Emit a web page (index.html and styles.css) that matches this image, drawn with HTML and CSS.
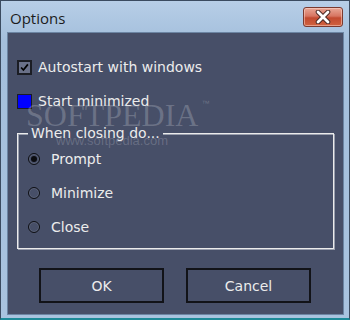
FILE: index.html
```html
<!DOCTYPE html>
<html>
<head>
<meta charset="utf-8">
<link rel="stylesheet" href="styles.css">
</head>
<body>
<div class="window">
  <div class="titlebar">
    <span class="title">Options</span>
    <div class="close">
      <svg width="20" height="14" viewBox="0 0 20 14">
        <path d="M5 2 L15 12 M15 2 L5 12" stroke="#4a2a25" stroke-width="4.6" stroke-linecap="round"/>
        <path d="M5 2 L15 12 M15 2 L5 12" stroke="#ffffff" stroke-width="2.8" stroke-linecap="round"/>
      </svg>
    </div>
  </div>
  <div class="client">
    <div class="row">
      <span class="check checked">
        <svg width="13" height="13" viewBox="0 0 13 13"><path d="M2.5 6.5 L5.2 9.5 L10.5 2.8" fill="none" stroke="#000" stroke-width="2"/></svg>
      </span>
      <span class="label">Autostart with windows</span>
    </div>
    <div class="row row2">
      <span class="check blue"></span>
      <span class="label">Start minimized</span>
    </div>
    <div class="group">
      <span class="legend">When closing do...</span>
      <div class="radio-row first">
        <span class="radio on"></span><span class="label">Prompt</span>
      </div>
      <div class="radio-row">
        <span class="radio"></span><span class="label">Minimize</span>
      </div>
      <div class="radio-row">
        <span class="radio"></span><span class="label">Close</span>
      </div>
    </div>
    <div class="buttons">
      <div class="btn">OK</div>
      <div class="btn">Cancel</div>
    </div>
    <div class="wm">SOFTPEDIA<sup class="tm">™</sup></div>
    <div class="wm-url">www.softpedia.com</div>
  </div>
</div>
</body>
</html>
```
FILE: styles.css
```css
html, body {
  margin: 0;
  padding: 0;
  background: #2a3a4e;
}
.window {
  width: 350px;
  height: 320px;
  box-sizing: border-box;
  border: 1px solid #3b4b60;
  border-bottom: 2px solid #1d8a98;
  background: linear-gradient(#b7cee7, #a4bfdc 40px, #a9c3df);
  display: flex;
  flex-direction: column;
}
.titlebar {
  height: 31px;
  flex: none;
  display: flex;
  align-items: flex-start;
  justify-content: space-between;
  padding: 0 6px 0 9px;
}
.title {
  font-family: "Open Sans", "Noto Sans", sans-serif;
  font-size: 15px;
  color: #1c1c1c;
  margin-top: 7px;
  line-height: 20px;
}
.close {
  margin-top: 6px;
  width: 40px;
  height: 20px;
  box-sizing: border-box;
  border: 1px solid #7a3a30;
  border-radius: 3px;
  background: linear-gradient(#e9a796, #d77561 45%, #c24a30 55%, #d0623f);
  display: flex;
  align-items: center;
  justify-content: center;
  box-shadow: inset 0 0 0 1px rgba(255,220,210,0.5);
}
.client {
  flex: 1;
  margin: 0 5px 3px 6px;
  border: 1px solid #6c85a3;
  background: #474f68;
  position: relative;
  padding: 26px 0 0 9px;
  font-family: "DejaVu Sans", sans-serif;
  font-size: 14px;
  color: #ececec;
}
.row {
  display: flex;
  align-items: center;
  height: 16px;
}
.row2 {
  margin-top: 18px;
}
.check {
  width: 15px;
  height: 15px;
  box-sizing: border-box;
  border: 1px solid #15171d;
  margin-right: 6px;
  display: flex;
  align-items: center;
  justify-content: center;
  flex: none;
}
.check.checked {
  background: #6a7189;
  border: 2px solid #1b1d24;
}
.check.blue {
  background: #0000ff;
  border: 1px solid #1b1d24;
}
.label {
  line-height: 17px;
  white-space: nowrap;
}
.group {
  position: relative;
  margin-top: 24px;
  width: 317px;
  height: 116px;
  box-sizing: border-box;
  border: 1px solid #ebebeb;
  box-shadow: inset 1px 1px 0 #9a9fae, 1px 1px 0 #9a9fae;
  padding: 17px 0 0 10px;
}
.legend {
  position: absolute;
  top: -9px;
  left: 10px;
  padding: 0 3px;
  background: #474f68;
  line-height: 17px;
}
.radio-row {
  display: flex;
  align-items: center;
  height: 16px;
  margin-top: 18px;
}
.radio-row.first {
  margin-top: 0;
}
.radio {
  width: 12px;
  height: 12px;
  box-sizing: border-box;
  border: 1px solid #0e0f14;
  border-radius: 50%;
  margin-right: 11px;
  flex: none;
  position: relative;
  box-shadow: inset 0 0 0 1px #5d6479;
}
.radio.on::after {
  content: "";
  position: absolute;
  left: 2px;
  top: 2px;
  width: 6px;
  height: 6px;
  border-radius: 50%;
  background: #0b0c10;
}
.buttons {
  display: flex;
  gap: 22px;
  margin-top: 19px;
  margin-left: 22px;
}
.btn {
  width: 125px;
  height: 35px;
  box-sizing: border-box;
  border: 2px solid #121318;
  display: flex;
  align-items: center;
  justify-content: center;
  color: #ececec;
}
.wm {
  position: absolute;
  left: 18px;
  top: 55px;
  font-family: "Liberation Serif", serif;
  font-size: 32px;
  line-height: 32px;
  color: rgba(200, 204, 214, 0.28);
  pointer-events: none;
}
.tm {
  font-family: "Liberation Sans", sans-serif;
  font-size: 8px;
  vertical-align: 20px;
  margin-left: 3px;
}
.wm-url {
  position: absolute;
  left: 48px;
  top: 100px;
  font-family: "Liberation Sans", sans-serif;
  font-size: 13px;
  color: rgba(200, 204, 214, 0.25);
  pointer-events: none;
}
```
